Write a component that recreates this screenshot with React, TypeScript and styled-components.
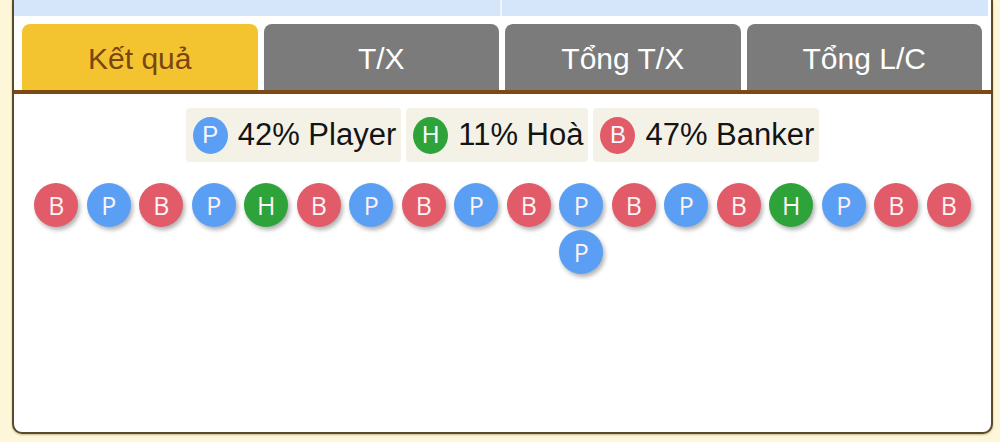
import * as React from 'react';
import styled, { createGlobalStyle } from 'styled-components';

type Side = 'P' | 'H' | 'B';

const sideColors: Record<Side, string> = {
  P: '#5b9ff4',
  H: '#2ea33a',
  B: '#e15b69',
};

const tabs = ['Kết quả', 'T/X', 'Tổng T/X', 'Tổng L/C'];

const legend: { side: Side; text: string }[] = [
  { side: 'P', text: '42% Player' },
  { side: 'H', text: '11% Hoà' },
  { side: 'B', text: '47% Banker' },
];

// each column of the bead road, top to bottom
const road: Side[][] = [
  ['B'], ['P'], ['B'], ['P'], ['H'], ['B'], ['P'], ['B'], ['P'],
  ['B'], ['P', 'P'], ['B'], ['P'], ['B'], ['H'], ['P'], ['B'], ['B'],
];

const GlobalStyle = createGlobalStyle`
  html, body {
    margin: 0;
    padding: 0;
    background: #fdf6d9;
    font-family: "Liberation Sans", Arial, sans-serif;
  }
`;

const Page = styled.div`
  width: 1000px;
  height: 442px;
  overflow: hidden;
  padding-left: 12px;
  box-sizing: border-box;
`;

const Panel = styled.div`
  width: 981px;
  height: 434px;
  box-sizing: border-box;
  background: #ffffff;
  border: 2px solid #5a4a26;
  border-top: none;
  border-radius: 0 0 10px 10px;
  box-shadow: 0 1px 2px rgba(90, 74, 38, 0.35);
  display: flex;
  flex-direction: column;
`;

const TopStrip = styled.div`
  height: 16px;
  margin-right: 3px;
  display: grid;
  grid-template-columns: 1fr 1fr;
  gap: 2px;
  background: #eef5fd;

  > div {
    background: #d5e6fa;
  }
`;

const TabBar = styled.div`
  margin-top: 8px;
  padding: 0 9px 0 8px;
  display: grid;
  grid-template-columns: repeat(4, 1fr);
  gap: 6px;
  border-bottom: 4px solid #7c4915;
`;

const Tab = styled.div<{ $active?: boolean }>`
  height: 66px;
  border-radius: 8px 8px 0 0;
  background: ${({ $active }) => ($active ? '#f3c430' : '#7a7b7a')};
  color: ${({ $active }) => ($active ? '#7a4512' : '#ffffff')};
  font-size: 30px;
  display: flex;
  align-items: center;
  justify-content: center;
  padding-top: 3px;
  box-sizing: border-box;
`;

const Legend = styled.div`
  margin-top: 14px;
  display: flex;
  justify-content: center;
  gap: 5px;
`;

const LegendItem = styled.div`
  height: 54px;
  padding: 0 5px 0 7px;
  display: flex;
  align-items: center;
  gap: 10px;
  background: #f4f2e7;
  border-radius: 4px;
  font-size: 31px;
  color: #141414;
`;

const LegendDot = styled.span<{ $side: Side }>`
  width: 35px;
  height: 37px;
  border-radius: 50%;
  background: ${({ $side }) => sideColors[$side]};
  color: #f4f7ff;
  font-size: 24px;
  display: flex;
  align-items: center;
  justify-content: center;
`;

const Road = styled.div`
  margin-top: 21px;
  display: flex;
  justify-content: center;
  align-items: flex-start;
  gap: 8.5px;
`;

const RoadColumn = styled.div`
  display: flex;
  flex-direction: column;
  gap: 3px;
`;

const Bead = styled.div<{ $side: Side }>`
  width: 44px;
  height: 44px;
  border-radius: 50%;
  background: ${({ $side }) => sideColors[$side]};
  color: #fbf3f4;
  font-family: "Open Sans", "Noto Sans", sans-serif;
  font-size: 25px;
  display: flex;
  align-items: center;
  justify-content: center;
  box-shadow: 2px 3px 4px rgba(0, 0, 0, 0.3);
`;

const App = (): JSX.Element => (
  <>
    <GlobalStyle />
    <Page>
      <Panel>
        <TopStrip>
          <div />
          <div />
        </TopStrip>
        <TabBar>
          {tabs.map((t, i) => (
            <Tab key={t} $active={i === 0}>{t}</Tab>
          ))}
        </TabBar>
        <Legend>
          {legend.map(({ side, text }) => (
            <LegendItem key={side}>
              <LegendDot $side={side}>{side}</LegendDot>
              {text}
            </LegendItem>
          ))}
        </Legend>
        <Road>
          {road.map((col, i) => (
            <RoadColumn key={i}>
              {col.map((s, j) => <Bead key={j} $side={s}>{s}</Bead>)}
            </RoadColumn>
          ))}
        </Road>
      </Panel>
    </Page>
  </>
);

export default App;
